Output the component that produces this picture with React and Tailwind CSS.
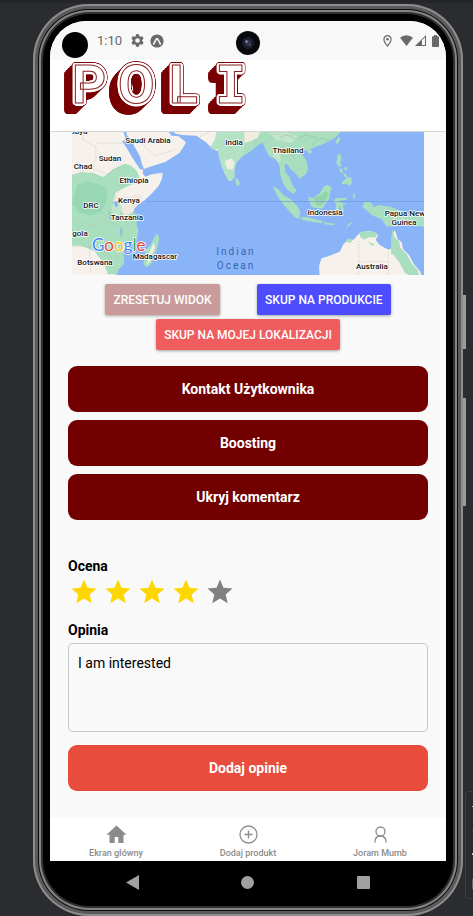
import React from "react";

const STAR =
  "M12 17.27 18.18 21l-1.64-7.03L22 9.24l-7.19-.61L12 2 9.19 8.63 2 9.24l5.46 4.73L5.82 21z";

const MAROON = "#790003";

// A ring of hard shadows, one for each direction, outlines the glyph at the given distance.
const ring = (radius, color) =>
  Array.from({ length: 24 }, (_, i) => {
    const angle = (i * Math.PI) / 12;
    return `${(Math.cos(angle) * radius).toFixed(2)}px ${(Math.sin(angle) * radius).toFixed(2)}px 0 ${color}`;
  });

const logoShadow = [
  ...ring(2.5, "#fff"),
  ...ring(3.3, MAROON),
  ...[2, 4, 6, 8].flatMap((d) =>
    ring(3, MAROON).map((shadow) => {
      const [x, y] = shadow.split("px").map(parseFloat);
      return `${x - d}px ${y + d}px 0 ${MAROON}`;
    })
  ),
].join(", ");

function Logo() {
  return (
    <div
      className="grid grid-cols-[46px_51px_46px_auto] justify-start pt-[2px] pl-[9px] text-[53px] leading-[46px] font-bold text-white [-webkit-text-stroke:1px_#8a2022]"
      style={{ textShadow: logoShadow }}
    >
      <span>P</span>
      <span>O</span>
      <span>L</span>
      <span className="font-['DejaVu_Sans_Mono',monospace] text-[52px]">I</span>
    </div>
  );
}

const LABELS = [
  ["Libya", 6, 2],
  ["Saudi Arabia", 76, 11],
  ["Sudan", 38, 29],
  ["Chad", 11, 37],
  ["Ethiopia", 62, 51],
  ["Kenya", 57, 71],
  ["DRC", 19, 76],
  ["Tanzania", 55, 88],
  ["gola", 8, 104],
  ["Madagascar", 83, 127],
  ["Botswana", 23, 133],
  ["India", 162, 13],
  ["Thailand", 216, 21],
  ["Indonesia", 253, 83],
  ["Papua New", 333, 84],
  ["Guinea", 332, 93],
  ["Australia", 300, 137],
];

function WorldMap() {
  return (
    <svg className="block h-[143px] w-full" viewBox="0 0 352 143" preserveAspectRatio="xMidYMid slice" fontFamily="Roboto, sans-serif">
      <rect width="352" height="143" fill="#8ab4f8" />
      <g transform="translate(-12 -7) scale(0.3333)">
        <path fill="#f6f1ea" d="M36 20h154l8 25 14 30 8 25 18 20 12 16-2 10 9 9 18-7 33-5-2 18-10 22-22 24-20 18-18 12-13 14-6 16 5 16 1 22 5 16-2 20-20 22-16 12-8 14 4 14-2 22-14 8-4 20H36z" />
        <path fill="#a9dfbf" d="M36 150l30-8 34 2 30 12 30-24 34-16 16 4 18 14 10 20-6 18-34 14-30 16-8 24 12 22 30 14 22 0 5 16 1 22 5 16-2 20-20 22-16 12-8 14 4 14-2 22-14 8-4 20h-30l-10-30-30-40-40-16H36z" />
        <path fill="#86cfa5" opacity=".5" d="M52 180l30-12 36 10 26 20-8 40-18 24-26 10-36-12-20-24z" />
        <path fill="#eee9df" d="M180 250l14-24 24-16 22-4 8 12-14 18-14 14-6 14-20 10z" />
        <path fill="#bfe6cc" d="M152 240l22-14 12 20-8 26-20 2z" />
        <path fill="#f6f1ea" d="M200 20h126l8 12 22 2 10 8 12 10-6 12-14 20-22 14-22 14-28 8-18 6-16 6-6-14-6-24-16-28-12-24-12-12z" />
        <path fill="#f6f1ea" d="M338 20h150v50l-18 8-20-14-12-12-18-12-10-8-44-2-18-4z" />
        <path fill="#b4e2c4" d="M470 20h100v58l-22 16-18 18-6 20 0 24-10 12-8 0-12-20-10-26-8-28-2-22-10 2-14-6 14-22z" />
        <path fill="#f0ede1" d="M494 108l22-8 8 14-6 20-16-2z" />
        <path fill="#a9dfbf" d="M525 160l8 2 7 12-4 9-8-3zM292 325l6 16-8 34-18 44-14 8-8-12 6-20-2-18 18-16 10-22z" />
        <path fill="#f2efdf" d="M281 354l4 12-14 42-9 10 3-30z" />
        <path fill="#8ab4f8" d="M186 48l14-2 26 40 18 38 4 12-8-4-22-32-16-28zM162 230l11-3 2 15-9 5zM146 259l4 2 3 22-4-1zM181 309l6 3-1 23-5-4z" />
        <path fill="none" stroke="#b9b8b0" strokeWidth="1.4" strokeDasharray="5 3" d="M66 20l4 26 38 20v34l-10 30M108 54h92M36 150l62-20 46 18 44-30M144 148l30 32 74-8M188 180l-22 38-20 48 12 24M166 218h40l22 40M66 290l50 20 30-20 42 20M36 365h54l28-22 40 10M88 365l4 76M134 380l24 18 32-2M245 55l40 38 60-20M110 250l30 24M420 35l30-14M476 50l40 20 40-30M490 94l34-12" />
      </g>
      <g transform="translate(173 -7) scale(0.3333)">
        <path fill="#a9dfbf" d="M-2 20h290l-18 18-34 18-34 14-16 8-16-8-4 12 18 24 5 26-6 16-20 13-10-15-14-12-14-18-6 4 2 22 13 14 8 24 12 16-8 11-18-12-14-20-8-26-3-28-10-18-20-8-12-24-8-18-12 6-22 18-22 14z" />
        <path fill="#f0ecdf" d="M-2 20h48l-8 18-20 10-20 6z" />
        <path fill="#c3e5c9" d="M72 24l54-2 40 14-30 18-42-10zM84 80l18 6 8 20-12 4-14-16z" />
        <path fill="#a9dfbf" d="M186 77l13-3 2 8-9 5zM281 35l5 6-6 14-8 2 1-10zM277 90l10-3 3 16-6 11 6 7-8 4-8-10 3-16zM284 130l8 2 2 12-8-3zM300 124l7 5-4 9-5-4zM294 144l10 4 2 10-8-4zM308 156l12 2 0 18-8 6-8-7-12 4-2-7 11-9z" />
        <path fill="#a9dfbf" d="M83 184l14 6 18 20 24 14 20 22 8 18-3 9-1 8-11-2-20-21-22-26-13-20zM166 277l20-1 20 6 26 6 2 6-26-2-38-8zM238 292l14 2 18 2-4 5-28-3zM306 302l12-11 3 3-16 14zM190 215l14 4 20-14 12-20 12-6 12 10-4 12-4 20-10 16-10 14-20-2-12-4-8-16zM266 225l8-5 34-2-4 6-24 3 12 8 14-2-12 8 4 18-8-2-7-14-4 18-8-1 2-20zM326 204l5 9-4 12-3-12zM358 232l18-2 10 16 18-6 30 5 50 18 54 12v30l-44-4-28-6-16 10-26-2-16-22-28-10-16-16-12-8z" />
        <path fill="#82cfa2" opacity=".65" d="M204 220l24-10 16-12 6 12-14 26-20 8z" />
        <path fill="#f6f1ea" d="M224 450l-2-28 8-22 20-6 34-14 12-24 14-10 16-2 12-14 12-8 20-4 20 4 10 8-8 14 12 16 26 14 10-4 2-42 8-12 8 26 12 10 4 20 18 18 14 26 20 24 6 20-6 40z" />
        <path fill="#a9dfbf" d="M344 322l18-4 28 4 8 8-10 8-14-2-18 8-10-8zM442 312l8 26 12 10 4 20 18 18 14 26 20 24 6 20-6 26-14-6-8-24-16-8-16-30-18-24-8-4 0-38zM300 348l12-8 12 4-8 10zM368 350l22 8-8 4z" />
        <path fill="none" stroke="#b9b8b0" strokeWidth="1.4" strokeDasharray="5 4" d="M341 348v102M430 380v70M341 410h88M110 100l30-10 24 22M84 60l20 20 20-14M28 45l34 12 20-30 60 4 40 14M146 140l34-14" />
        <path fill="none" stroke="#85b89a" strokeWidth="1.4" d="M105 38l20-8 26 12 30-12 34 8M200 60l24-20 28 4" />
      </g>
      <path d="M74 69.5H352" stroke="#6f9be0" strokeWidth="1" opacity=".7" />
      <g fontSize="8" fontWeight="500" fill="#111" textAnchor="middle" stroke="#fff" strokeWidth="1.6" strokeLinejoin="round" style={{ paintOrder: "stroke" }}>
        {LABELS.map(([name, x, y]) => (
          <text key={name} x={x} y={y}>{name}</text>
        ))}
      </g>
      <g fontSize="10" fill="#3566b4" textAnchor="middle" className="tracking-[2px]">
        <text x="164" y="123">Indian</text>
        <text x="164" y="137">Ocean</text>
      </g>
      <g fontFamily="Lato, sans-serif" fontSize="17" fontWeight="400" stroke="#fff" strokeWidth="1.5" style={{ paintOrder: "stroke" }}>
        <text x="20" y="119">
          <tspan fill="#4285f4">G</tspan>
          <tspan fill="#ea4335">o</tspan>
          <tspan fill="#fbbc05">o</tspan>
          <tspan fill="#4285f4">g</tspan>
          <tspan fill="#34a853">l</tspan>
          <tspan fill="#ea4335">e</tspan>
        </text>
      </g>
    </svg>
  );
}

function StatusBar() {
  return (
    <div className="relative flex h-[39px] items-center bg-[#f8f8f8] pr-[7px] pl-3 text-[#696969]">
      <span className="mt-[9px] size-[26px] rounded-full bg-black" />
      <span className="ml-[9px] text-[13px] leading-5">1:10</span>
      <svg className="ml-[9px] size-[13px]" viewBox="2 2 20 20" fill="currentColor">
        <path d="M19.14 12.94c.04-.3.06-.61.06-.94s-.02-.64-.07-.94l2.03-1.58a.49.49 0 0 0 .12-.61l-1.92-3.32a.49.49 0 0 0-.59-.22l-2.39.96a7 7 0 0 0-1.62-.94l-.36-2.54a.48.48 0 0 0-.48-.41h-3.84a.48.48 0 0 0-.47.41l-.36 2.54c-.59.24-1.13.57-1.62.94l-2.39-.96a.48.48 0 0 0-.59.22L2.74 8.87a.48.48 0 0 0 .12.61l2.03 1.58c-.05.3-.09.63-.09.94s.02.64.07.94l-2.03 1.58a.49.49 0 0 0-.12.61l1.92 3.32c.12.22.37.29.59.22l2.39-.96c.5.38 1.03.7 1.62.94l.36 2.54c.05.24.24.41.48.41h3.84c.24 0 .44-.17.47-.41l.36-2.54a7 7 0 0 0 1.62-.94l2.39.96c.22.08.47 0 .59-.22l1.92-3.32a.48.48 0 0 0-.12-.61zM12 15.6a3.6 3.6 0 1 1 0-7.2 3.6 3.6 0 0 1 0 7.2z" />
      </svg>
      <svg className="ml-[6px] size-[14px]" viewBox="0 0 14 14">
        <circle cx="7" cy="7" r="6.6" fill="currentColor" />
        <path d="M3.7 9.8C5.2 8.2 5.6 4.6 7 4.6s1.8 3.6 3.3 5.2" fill="none" stroke="#f8f8f8" strokeWidth="1.7" strokeLinecap="round" />
      </svg>
      <svg className="absolute top-[10px] left-1/2 size-6 -translate-x-1/2" viewBox="0 0 24 24">
        <circle cx="12" cy="12" r="12" fill="#08090d" />
        <circle cx="12" cy="12" r="6" fill="#1b1c2c" />
        <circle cx="12" cy="12" r="3" fill="#30334d" />
        <circle cx="10.5" cy="10.5" r="1.5" fill="#777b99" />
        <circle cx="14" cy="14" r="1" fill="#4a4f70" />
      </svg>
      <span className="ml-auto flex items-center">
        <svg className="h-3 w-[9px]" viewBox="0 0 9 12">
          <path d="M4.5.7A3.6 3.6 0 0 0 .9 4.3C.9 7 4.5 11 4.5 11S8.1 7 8.1 4.3A3.6 3.6 0 0 0 4.5.7z" fill="none" stroke="currentColor" strokeWidth="1.2" />
          <circle cx="4.5" cy="4.3" r="1.3" fill="currentColor" />
        </svg>
        <svg className="ml-2 h-[11px] w-[13px]" viewBox="0 0 13 11" fill="currentColor">
          <path d="M0 2.8a9.5 9.5 0 0 1 13 0L6.5 11z" />
        </svg>
        <svg className="ml-[2px] size-[11px]" viewBox="0 0 11 11">
          <path d="M0 11 11 0v11z" fill="currentColor" />
          <path d="M7 5.2 10 2.2V10H7z" fill="#f8f8f8" />
        </svg>
        <svg className="ml-[6px] h-3 w-[7px]" viewBox="0 0 7 12" fill="currentColor">
          <path d="M2 0h3v1.2h1.2a.8.8 0 0 1 .8.8v9.2a.8.8 0 0 1-.8.8H.8a.8.8 0 0 1-.8-.8V2a.8.8 0 0 1 .8-.8H2z" />
        </svg>
      </span>
    </div>
  );
}

const mapButton =
  "h-[31px] rounded-[2px] px-2 text-xs font-medium text-white shadow-[0_1px_3px_rgba(0,0,0,0.35)]";
const wideButton = "h-[46px] w-full rounded-[9px] text-sm font-bold text-white";
const tab = "flex flex-1 flex-col items-center gap-[2px] pt-[6px] text-[9px] leading-3 font-medium text-[#8b8b8b]";

export default function App() {
  const [rating, setRating] = React.useState(4);
  return (
    <div className="relative min-h-screen overflow-hidden border-t-[3px] border-[#242528] bg-[#2b2c30] pt-px pr-[10px] pl-[33px] font-['Roboto',sans-serif]">
      <div className="relative rounded-[56px] bg-black px-[17px] pt-[17px] pb-3 shadow-[inset_0_0_0_2px_#8d8d8d,inset_0_0_0_5px_#5a5a5a,inset_0_0_0_6px_#0b0b0b,inset_0_0_0_8px_#858585,inset_0_0_0_10px_#303030]">
        <span className="absolute top-[291px] -right-[3px] h-[54px] w-[3px] bg-[#9b9b9b]" />
        <span className="absolute top-[394px] -right-[3px] h-[108px] w-[3px] bg-[#9b9b9b]" />
        <div className="overflow-hidden rounded-t-[36px] bg-[#f9f9f9]">
          <StatusBar />
          <header className="h-[72px] border-b border-[#d6d6d6] bg-white pl-[13px]">
            <Logo />
          </header>
          <main className="px-[18px] pb-[27px]">
            <div className="px-1">
              <WorldMap />
            </div>
            <div className="mt-[9px] flex flex-wrap justify-evenly gap-y-1">
              <button type="button" className={`${mapButton} bg-[#c99b9b]`}>ZRESETUJ WIDOK</button>
              <button type="button" className={`${mapButton} bg-[#4d4dff]`}>SKUP NA PRODUKCIE</button>
              <button type="button" className={`${mapButton} bg-[#ef5d5f]`}>SKUP NA MOJEJ LOKALIZACJI</button>
            </div>
            <div className="mt-4 flex flex-col gap-2">
              <button type="button" className={`${wideButton} bg-[#730000]`}>Kontakt Użytkownika</button>
              <button type="button" className={`${wideButton} bg-[#730000]`}>Boosting</button>
              <button type="button" className={`${wideButton} bg-[#730000]`}>Ukryj komentarz</button>
            </div>
            <h2 className="mt-9 text-sm leading-5 font-bold text-black">Ocena</h2>
            <div className="mt-px flex gap-1 pl-px">
              {[1, 2, 3, 4, 5].map((n) => (
                <button key={n} type="button" aria-label={`Ocena ${n}`} onClick={() => setRating(n)}>
                  <svg className={n <= rating ? "block size-[30px] text-[#ffd700]" : "block size-[30px] text-[#808080]"} viewBox="0 0 24 24" fill="currentColor">
                    <path d={STAR} />
                  </svg>
                </button>
              ))}
            </div>
            <label htmlFor="opinia" className="mt-[13px] block text-sm leading-5 font-bold text-black">Opinia</label>
            <textarea
              id="opinia"
              defaultValue="I am interested"
              className="mt-[3px] block h-[89px] w-full resize-none rounded-[5px] border border-[#c8c8c8] bg-transparent px-[9px] py-[9px] text-sm leading-5 text-black outline-none"
            />
            <button type="button" className={`${wideButton} mt-[13px] bg-[#e74c3c]`}>Dodaj opinie</button>
          </main>
          <nav className="flex h-[43px] bg-white">
            <a href="#home" className={tab}>
              <svg className="size-[21px]" viewBox="0 0 21 21" fill="currentColor">
                <path d="M10.5 1.5.5 10.7h3v8.3h5.2v-6h3.6v6h5.2v-8.3h3z" />
              </svg>
              Ekran główny
            </a>
            <a href="#add" className={tab}>
              <svg className="size-[21px]" viewBox="0 0 21 21" fill="none" stroke="currentColor" strokeWidth="1.3">
                <circle cx="10.5" cy="10.5" r="8.5" />
                <path d="M10.5 6.5v8M6.5 10.5h8" />
              </svg>
              Dodaj produkt
            </a>
            <a href="#profile" className={tab}>
              <svg className="size-[21px]" viewBox="0 0 21 21" fill="none" stroke="currentColor" strokeWidth="1.3">
                <circle cx="10.5" cy="7.5" r="4.5" />
                <path d="M4.9 18.5c0-4 2.3-6.5 5.6-6.5s5.6 2.5 5.6 6.5" />
              </svg>
              Joram Mumb
            </a>
          </nav>
        </div>
        <div className="flex h-[43px] items-center justify-around px-[25px] text-[#a0a0a0]">
          <button type="button" aria-label="Back">
            <svg className="block h-[15px] w-[13px]" viewBox="0 0 13 15" fill="currentColor"><path d="M13 0v15L0 7.500z" /></svg>
          </button>
          <button type="button" aria-label="Home">
            <span className="block size-[13px] rounded-full bg-current" />
          </button>
          <button type="button" aria-label="Overview">
            <span className="block size-[13px] rounded-[1px] bg-current" />
          </button>
        </div>
      </div>
      <div className="absolute top-[788px] -right-6 flex h-[108px] w-8 flex-col justify-between rounded-[3px] border border-[#3d3e42] pt-[14px] pb-2 pl-[6px]">
        <span className="h-px w-4 bg-[#c8c8c8]" />
        <span className="h-px w-4 bg-[#55565a]" />
        <span className="size-[2px] bg-[#c8c8c8]" />
        <span className="h-3 w-4 rounded-[2px] border border-[#66676b]" />
      </div>
    </div>
  );
}
